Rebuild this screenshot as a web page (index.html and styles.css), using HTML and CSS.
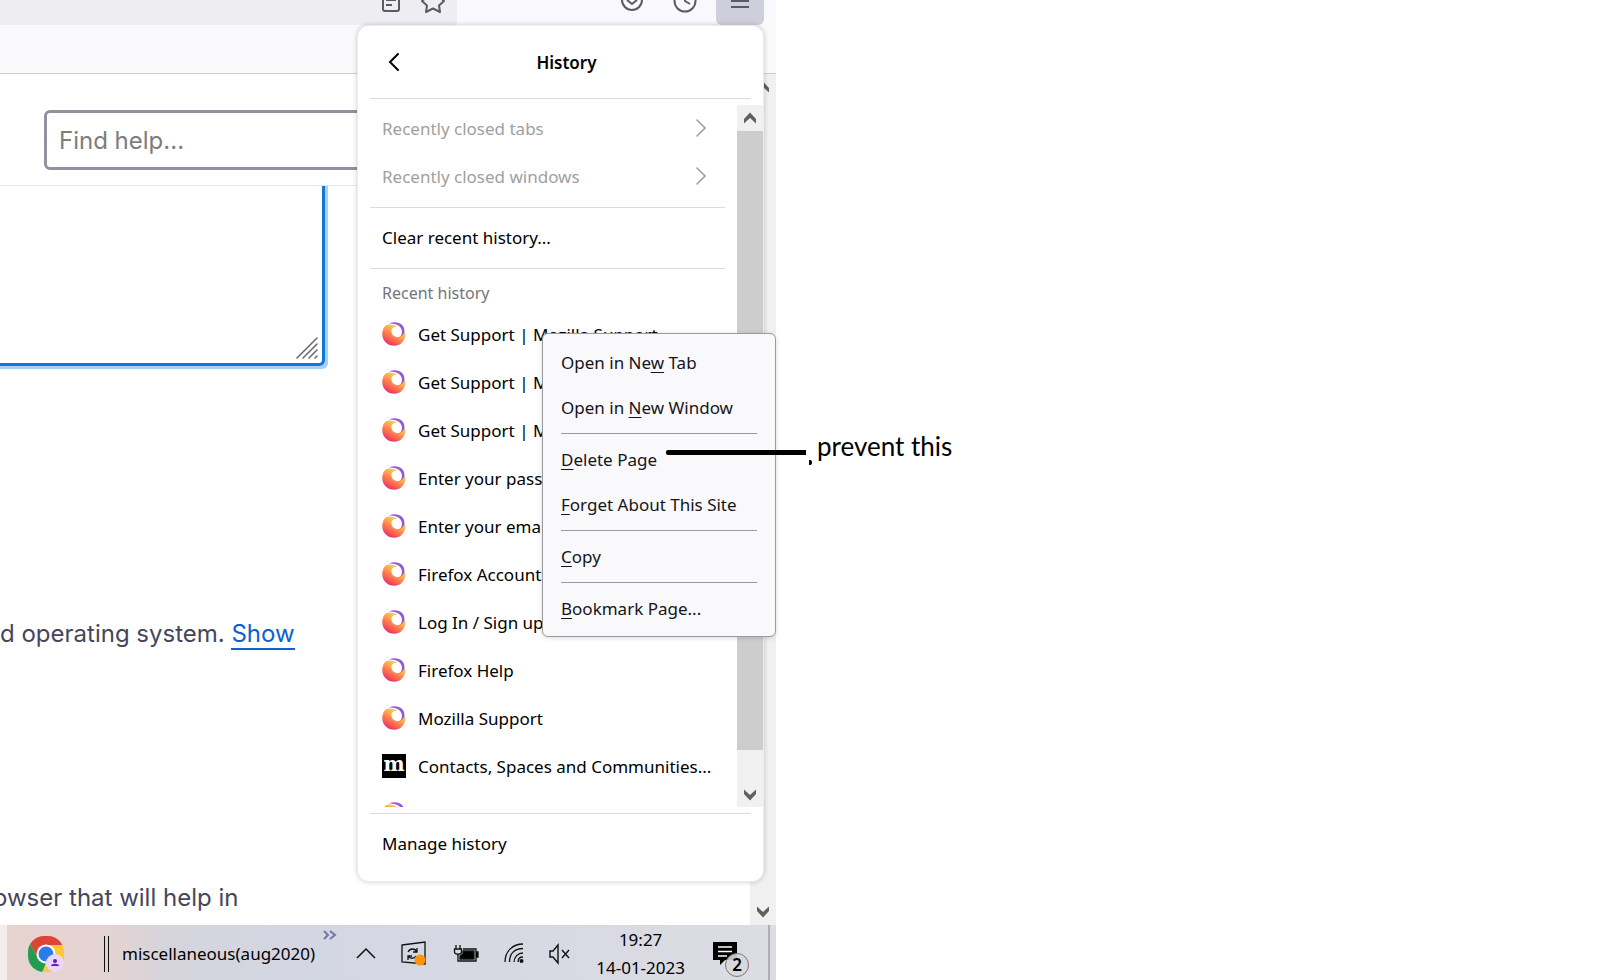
FILE: index.html
```html
<!DOCTYPE html>
<html lang="en">
<head>
    <meta charset="UTF-8">
    <meta name="viewport" content="width=device-width, initial-scale=1.0">
    <title>Firefox History Menu</title>
    <link rel="stylesheet" href="styles.css">
</head>
<body>
    <!-- Shared icons -->
    <svg width="0" height="0" class="sprite" aria-hidden="true">
        <defs>
            <linearGradient id="fire" x1="0.85" y1="0.15" x2="0.3" y2="1">
                <stop offset="0" stop-color="#ffd567"/>
                <stop offset="0.4" stop-color="#ffa04c"/>
                <stop offset="0.75" stop-color="#fb5a54"/>
                <stop offset="1" stop-color="#e5286a"/>
            </linearGradient>
            <linearGradient id="tail" x1="0" y1="0" x2="1" y2="1">
                <stop offset="0" stop-color="#c050e0"/>
                <stop offset="1" stop-color="#6a5be0"/>
            </linearGradient>
            <symbol id="firefox" viewBox="0 0 24 24">
                <path fill="url(#fire)" d="M3.500 3.800C5 2.500 8 2 10.500 3c2 .2 3.500 1 4.500 2-3-.5-5 .6-5.500 3-.5 3.500 1.500 6.500 5 7 4 .4 7-2.500 8-6.500 2 6-.5 11.500-5 14-4 2-9 1.600-12.500-1C1 18.500-.3 14 .5 9.500 1 7 2 5 3.500 3.800z"/>
                <path fill="url(#tail)" d="M7 1.300C12-.7 18.500.2 21.200 4.400c2.300 3.800 1.200 8.200-2.700 10.400 1.800-3 2-6.400.4-8.800C16.500 2.500 12 1.800 7 1.300z"/>
            </symbol>
            <symbol id="chevron" viewBox="0 0 12 20">
                <path d="M2 2l8 8-8 8" fill="none" stroke="currentColor" stroke-width="1.600" stroke-linecap="round"/>
            </symbol>
            <symbol id="arrow-up" viewBox="0 0 14 12">
                <path d="M1 7L7 .5 13 7v4.500L7 6l-6 5.500z" fill="#606060"/>
            </symbol>
            <symbol id="arrow-down" viewBox="0 0 14 12">
                <path d="M1 5l6 6.500L13 5V.5L7 6 1 .5z" fill="#606060"/>
            </symbol>
        </defs>
    </svg>

    <div class="canvas">
        <div class="desktop">
            <!-- Browser toolbar -->
            <div class="toolbar">
                <div class="urlbar">
                    <button class="tool" aria-label="Reader view">
                        <svg width="20" height="24" viewBox="0 0 20 24" fill="none" stroke="#5b5b66" stroke-width="2"><rect x="2" y="-6" width="16" height="17" rx="2"/><path d="M5 0h10M5 5h6"/></svg>
                    </button>
                    <button class="tool" aria-label="Bookmark this page">
                        <svg width="24" height="24" viewBox="0 0 24 24" fill="none" stroke="#5b5b66" stroke-width="2" stroke-linejoin="round"><path d="M8-5L1 1l5 4.500L5 12l7-3.500L19 12l-1-6.500L23 1l-7-6"/></svg>
                    </button>
                </div>
                <div class="tools">
                    <button class="tool" aria-label="Save to Pocket">
                        <svg width="24" height="24" viewBox="0 0 24 24" fill="none" stroke="#5b5b66" stroke-width="2"><circle cx="12" cy="0" r="10"/><path d="M7 0l5 4 5-4"/></svg>
                    </button>
                    <button class="tool" aria-label="History">
                        <svg width="24" height="24" viewBox="0 0 24 24" fill="none" stroke="#5b5b66" stroke-width="2"><circle cx="12" cy="1" r="10.500"/><path d="M12-6v7l5 3"/></svg>
                    </button>
                    <button class="tool app-menu" aria-label="Application menu">
                        <svg width="20" height="24" viewBox="0 0 20 24" stroke="#5b5b66" stroke-width="2"><path d="M1 1h18M1 7h18"/></svg>
                    </button>
                </div>
            </div>
            <div class="bookmarks-bar"></div>

            <!-- Support page -->
            <div class="viewport">
                <main class="page">
                    <div class="page-header">
                        <input class="search" type="text" placeholder="Find help..." aria-label="Find help">
                    </div>
                    <div class="field">
                        <textarea class="details" aria-label="Details"></textarea>
                        <svg class="grip" width="22" height="22" viewBox="0 0 22 22" stroke="#6c6c6c" stroke-width="1.600" stroke-linecap="round"><path d="M1 21L21 1M7 21L21 7M13 21l8-8M19 21l2-2"/></svg>
                    </div>
                    <p class="copy">d operating system. <a href="#">Show</a></p>
                    <p class="copy clipped">owser that will help in</p>
                </main>
                <div class="page-scroll">
                    <svg width="14" height="12"><use href="#arrow-up"/></svg>
                    <svg width="14" height="12"><use href="#arrow-down"/></svg>
                </div>
            </div>

            <!-- Windows taskbar -->
            <div class="taskbar">
                <button class="chrome" aria-label="Chrome">
                    <svg width="36" height="36" viewBox="0 0 36 36">
                        <clipPath id="round"><rect width="36" height="36" rx="16"/></clipPath>
                        <g clip-path="url(#round)">
                            <path fill="#dd4437" d="M0 0h36v9H18L10 22 2 8z"/>
                            <path fill="#259b4c" d="M2 8l8 14 8 5-4 10H0V8z"/>
                            <path fill="#fcc934" d="M18 9h18v27H14l10-14z"/>
                        </g>
                        <circle cx="18" cy="18" r="9.500" fill="#fff"/>
                        <circle cx="18" cy="18" r="7.500" fill="#2a7de8"/>
                        <circle cx="27" cy="27" r="9" fill="#ead7fb"/>
                        <circle cx="27" cy="25" r="2" fill="#6a17b5"/>
                        <path d="M23 30c0-3 8-3 8 0z" fill="#6a17b5"/>
                    </svg>
                </button>
                <span class="grabber"></span>
                <span class="folder">miscellaneous(aug2020)</span>
                <button class="more" aria-label="More">
                    <svg width="14" height="10" viewBox="0 0 14 10" fill="none" stroke="#7774aa" stroke-width="2"><path d="M1 1l4 4-4 4M7 1l5 4-5 4"/></svg>
                </button>
                <div class="tray">
                    <svg width="20" height="24" viewBox="0 0 20 24" fill="none" stroke="#111" stroke-width="1.500"><path d="M1 16l9-9 9 9"/></svg>
                    <svg width="26" height="26" viewBox="0 0 26 26" fill="none" stroke="#111" stroke-width="1.300">
                        <path d="M1 4l23-3v22l-23-2z"/>
                        <path d="M7 11c2-4 7-4 9 0M16 7v4h-4M15 15c-2 3-6 3-8 0M7 19v-4h4"/>
                        <circle cx="19" cy="19" r="5.500" fill="#ff9408" stroke="none"/>
                    </svg>
                    <svg width="26" height="24" viewBox="0 0 26 24" fill="none" stroke="#111" stroke-width="1.300">
                        <path d="M3 3v4M7 3v4M1.500 7h7v3c0 3-7 3-7 0zM5 13v6h18V7H10"/>
                        <path d="M10 9h11v8H7v-3l3-2z" fill="#000"/>
                        <path d="M23 10h2v5h-2" fill="#000"/>
                    </svg>
                    <svg width="20" height="24" viewBox="0 0 20 24" fill="none" stroke="#111" stroke-width="1.300">
                        <path d="M1 20C1 9 9 2 19 2M5.500 20C5.500 11 11 6.500 19 6.500M10 20c0-5 4-9 9-9M14 20c0-3 2-5 5-5"/>
                        <circle cx="17.500" cy="19" r="2" fill="#111" stroke="none"/>
                    </svg>
                    <svg width="22" height="24" viewBox="0 0 22 24" fill="none" stroke="#111" stroke-width="1.400"><path d="M1 9h3l5-6v18l-5-6H1zM13 8l7 8M20 8l-7 8"/></svg>
                </div>
                <div class="clock"><time>19:27</time><time>14-01-2023</time></div>
                <button class="notify" aria-label="Notifications">
                    <svg width="24" height="24" viewBox="0 0 24 24"><path d="M0 0h24v18H12l-5 5v-5H0z"/><path d="M5 5h14M5 9.500h14M5 14h9" stroke="#fff" stroke-width="1.300"/></svg>
                    <span class="count">2</span>
                </button>
                <span class="peek"></span>
            </div>

            <!-- History panel -->
            <section class="panel">
                <header class="panel-header">
                    <button class="back" aria-label="Back">
                        <svg width="12" height="20" viewBox="0 0 12 20"><path d="M10 2l-8 8 8 8" fill="none" stroke="#000" stroke-width="2" stroke-linecap="round"/></svg>
                    </button>
                    <h1>History</h1>
                </header>
                <hr>
                <div class="panel-body">
                    <div class="list">
                        <button class="row" disabled>Recently closed tabs<svg width="12" height="20"><use href="#chevron"/></svg></button>
                        <button class="row" disabled>Recently closed windows<svg width="12" height="20"><use href="#chevron"/></svg></button>
                        <hr>
                        <button class="row">Clear recent history...</button>
                        <hr>
                        <h2>Recent history</h2>
                        <button class="row"><svg class="favicon"><use href="#firefox"/></svg>Get Support | Mozilla Support</button>
                        <button class="row"><svg class="favicon"><use href="#firefox"/></svg>Get Support | Mozilla Support</button>
                        <button class="row"><svg class="favicon"><use href="#firefox"/></svg>Get Support | Mozilla Support</button>
                        <button class="row"><svg class="favicon"><use href="#firefox"/></svg>Enter your password</button>
                        <button class="row"><svg class="favicon"><use href="#firefox"/></svg>Enter your email</button>
                        <button class="row"><svg class="favicon"><use href="#firefox"/></svg>Firefox Accounts</button>
                        <button class="row"><svg class="favicon"><use href="#firefox"/></svg>Log In / Sign up</button>
                        <button class="row"><svg class="favicon"><use href="#firefox"/></svg>Firefox Help</button>
                        <button class="row"><svg class="favicon"><use href="#firefox"/></svg>Mozilla Support</button>
                        <button class="row"><span class="favicon mozilla">m</span>Contacts, Spaces and Communities...</button>
                        <button class="row" aria-label="Mozilla"><svg class="favicon"><use href="#firefox"/></svg></button>
                    </div>
                    <div class="scrollbar">
                        <svg width="14" height="12"><use href="#arrow-up"/></svg>
                        <span class="thumb"></span>
                        <svg width="14" height="12"><use href="#arrow-down"/></svg>
                    </div>
                </div>
                <hr>
                <button class="row">Manage history</button>
            </section>

            <!-- Context menu -->
            <div class="context-menu" role="menu">
                <button role="menuitem"><span>Open in Ne<u>w</u> Tab</span></button>
                <button role="menuitem"><span>Open in <u>N</u>ew Window</span></button>
                <hr>
                <button role="menuitem"><span><u>D</u>elete Page</span></button>
                <button role="menuitem"><span><u>F</u>orget About This Site</span></button>
                <hr>
                <button role="menuitem"><span><u>C</u>opy</span></button>
                <hr>
                <button role="menuitem"><span><u>B</u>ookmark Page...</span></button>
            </div>
        </div>

        <div class="notes">
            <p class="note">prevent this</p>
            <span class="pointer"></span>
            <span class="dot"></span>
        </div>
    </div>
</body>
</html>
```
FILE: styles.css
```css
* {
    box-sizing: border-box;
}

body {
    margin: 0;
    background: white;
    font-family: "Noto Sans", "Open Sans", sans-serif;
    font-size: 17px;
    color: #000;
    overflow: hidden;
}

button {
    margin: 0;
    padding: 0;
    border: none;
    background: none;
    font: inherit;
    color: inherit;
    text-align: left;
}

svg {
    display: block;
    flex: none;
}

.sprite {
    position: absolute;
}

.canvas {
    display: grid;
    grid-template-columns: 97fr 106fr;
    height: 100vh;
}

.desktop {
    position: relative;
    display: flex;
    flex-direction: column;
    min-width: 0;
    height: 100vh;
}

/* Browser toolbar */
.toolbar {
    display: flex;
    height: 25px;
    background: #f9f8fc;
}

.urlbar {
    flex: 1;
    display: flex;
    justify-content: flex-end;
    gap: 20px;
    padding-right: 12px;
    background: #eeedf2;
    border-bottom-right-radius: 4px;
}

.tools {
    display: flex;
    justify-content: flex-end;
    gap: 29px;
    width: 319px;
    padding-right: 12px;
}

.tool {
    display: flex;
    justify-content: center;
    height: 25px;
}

.app-menu {
    width: 48px;
    margin-left: -10px;
    background: #cfcedb;
    border-radius: 0 0 6px 6px;
}

.bookmarks-bar {
    height: 49px;
    background: #f9f9fb;
    border-bottom: 1px solid #ccccd0;
}

/* Support page */
.viewport {
    flex: 1;
    display: flex;
    min-height: 0;
}

.page {
    flex: 1;
    min-width: 0;
    overflow: hidden;
    font-family: Inter, sans-serif;
    font-size: 24px;
}

.page-header {
    height: 112px;
    padding: 36px 0 0 44px;
    border-bottom: 1px solid #e7e7ea;
}

.search {
    width: 100%;
    height: 60px;
    padding: 0 12px;
    border: 3px solid #9391a0;
    border-radius: 6px;
    background: white;
    font: inherit;
}

.search::placeholder {
    color: #7d7d7d;
    opacity: 1;
}

.field {
    position: relative;
    width: 331px;
    height: 180px;
    margin-left: -6px;
}

.details {
    display: block;
    width: 100%;
    height: 100%;
    border: 3px solid #0f79d5;
    border-width: 0 3px 3px 0;
    border-radius: 0 0 6px 0;
    box-shadow: 3px 3px 0 #aacff6, 3px 0 0 #aacff6;
    outline: none;
    resize: none;
}

.grip {
    position: absolute;
    right: 7px;
    bottom: 7px;
}

.copy {
    margin: 250px 0 0;
    color: #45465b;
    line-height: 36px;
    white-space: nowrap;
}

.copy.clipped {
    margin: 228px 0 0 -7px;
}

.copy a {
    color: #0b60d3;
    text-decoration: none;
    border-bottom: 2px solid #0b60d3;
}

.page-scroll {
    display: flex;
    flex-direction: column;
    justify-content: space-between;
    align-items: center;
    width: 26px;
    padding: 7px 0;
    background: #f0f0f0;
}

/* Windows taskbar */
.taskbar {
    display: flex;
    align-items: center;
    height: 55px;
    padding: 2px 0 0 28px;
    background: linear-gradient(90deg, #f3edea 0, #f3edea 7px, #e6d3d0 7px, #e3d3d2 110px, #d5d4dd 170px, #d3d7e2 320px, #d8d9e2 560px, #dcdce4 100%);
}

.grabber {
    width: 5px;
    height: 36px;
    margin: 0 13px 0 40px;
    border: 1px solid #111;
    border-width: 0 1px;
}

.more {
    align-self: flex-start;
    margin: 3px 19px 0 8px;
}

.tray {
    flex: 1;
    display: flex;
    align-items: center;
    justify-content: space-between;
}

.clock {
    display: flex;
    flex-direction: column;
    align-items: center;
    margin: 0 28px 0 25px;
    line-height: 28px;
}

.notify {
    position: relative;
}

.count {
    position: absolute;
    top: 11px;
    left: 12px;
    width: 24px;
    height: 24px;
    border: 1px solid #77777b;
    border-radius: 50%;
    background: rgba(215, 215, 220, 0.9);
    font-weight: 600;
    line-height: 22px;
    text-align: center;
}

.peek {
    align-self: stretch;
    width: 8px;
    margin: -2px 0 0 31px;
    border-left: 2px solid #adadb3;
}

/* History panel */
.panel {
    position: absolute;
    top: 25px;
    right: 12px;
    bottom: 98px;
    display: flex;
    flex-direction: column;
    width: 407px;
    padding-bottom: 13px;
    border: 1px solid #ececee;
    border-radius: 12px;
    background: white;
    box-shadow: 0 0 5px rgba(0, 0, 0, 0.2);
}

.panel hr {
    flex: none;
    width: auto;
    height: 1px;
    margin: 6px 12px;
    border: none;
    background: #dcdcde;
}

.panel-header {
    display: flex;
    align-items: center;
    height: 72px;
    padding: 0 30px;
}

.panel > .panel-header + hr {
    margin-top: 0;
}

.panel-header h1 {
    flex: 1;
    margin: 0;
    font-size: 17px;
    font-weight: 600;
    text-align: center;
}

.panel-body {
    flex: 1;
    display: flex;
    min-height: 0;
}

.list {
    flex: 1;
    min-width: 0;
    overflow: hidden;
}

.list h2 {
    margin: 0;
    padding: 0 24px;
    font-size: 16px;
    font-weight: 400;
    line-height: 36px;
    color: #75757a;
}

.row {
    display: flex;
    flex: none;
    align-items: center;
    gap: 12px;
    width: 100%;
    height: 48px;
    padding: 0 24px 2px;
    white-space: nowrap;
}

.row:disabled {
    justify-content: space-between;
    padding-right: 30px;
    color: #a0a0a0;
}

.favicon {
    width: 24px;
    height: 24px;
}

.mozilla {
    background: #000;
    color: white;
    font-family: "DejaVu Serif", serif;
    font-size: 20px;
    font-weight: 700;
    line-height: 20px;
    text-align: center;
}

.scrollbar {
    display: flex;
    flex-direction: column;
    align-items: center;
    width: 26px;
    padding: 7px 0 6px;
    background: #f0f0f0;
}

.thumb {
    flex: 1;
    width: 26px;
    margin: 7px 0 39px;
    background: #cdcdcd;
}

/* Context menu */
.context-menu {
    position: absolute;
    top: 333px;
    right: 0;
    width: 234px;
    padding: 6px 18px 5px;
    border: 1px solid #9a9a9f;
    border-radius: 6px;
    background: #f9f9fb;
    box-shadow: 0 1px 5px rgba(0, 0, 0, 0.15);
    color: #15141a;
}

.context-menu button {
    display: block;
    width: 100%;
    height: 45px;
    white-space: nowrap;
}

.context-menu u {
    text-underline-offset: 3px;
    text-decoration-thickness: 1px;
    text-decoration-skip-ink: none;
}

.context-menu hr {
    height: 1px;
    margin: 3px 0;
    border: none;
    background: #98989d;
}

/* Annotation */
.notes {
    position: relative;
    padding: 428px 0 0 41px;
}

.note {
    margin: 0;
    font-family: Lato, sans-serif;
    font-size: 26px;
    line-height: 36px;
}

.pointer {
    position: absolute;
    top: 450px;
    left: -110px;
    width: 140px;
    height: 5px;
    border-radius: 2px 0 0 2px;
    background: #000;
}

.dot {
    position: absolute;
    top: 460px;
    left: 33px;
    width: 3px;
    height: 5px;
    border-radius: 0 2px 2px 0;
    background: #000;
}
```
